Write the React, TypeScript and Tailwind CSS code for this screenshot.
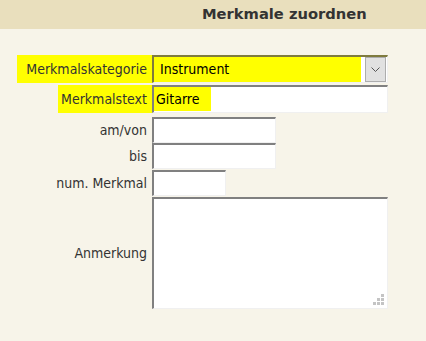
const label = "flex w-[135px] shrink-0 items-center justify-end pr-[5px] text-[#333]"
const field = "border-t-2 border-l-2 border-r border-b border-t-[#808080] border-l-[#808080] border-r-[#f0f0f0] border-b-[#f0f0f0] bg-white"

function Grip() {
  const dots = [
    [8, 0],
    [4, 4],
    [8, 4],
    [0, 8],
    [4, 8],
    [8, 8],
  ]
  return (
    <svg className="absolute right-[3px] bottom-[3px]" width="11" height="11" viewBox="0 0 11 11">
      {dots.map(([x, y]) => (
        <rect key={`${x}-${y}`} x={x} y={y} width="3" height="3" fill="#c4c4c4" />
      ))}
    </svg>
  )
}

export default function App() {
  return (
    <div
      className="h-[341px] w-[426px] bg-[#f7f4e9] text-[14px]"
      style={{ fontFamily: '"DejaVu Sans Condensed", "DejaVu Sans", sans-serif' }}
    >
      <div className="flex h-[29px] items-center bg-[#e9dfbd] pl-[202px]">
        <h1
          className="text-[14.7px] font-bold text-[#333]"
          style={{ fontFamily: '"DejaVu Sans", sans-serif' }}
        >
          Merkmale zuordnen
        </h1>
      </div>

      <div className="flex flex-col pl-[17px] pt-[26px]">
        {/* Merkmalskategorie */}
        <div className="flex h-[28px]">
          <div className={`${label} bg-[#ffff00]`}>Merkmalskategorie</div>
          <div className="flex w-[236px] items-center border-t-2 border-l-2 border-r border-b border-t-[#7f7b3e] border-l-[#7f7b3e] border-r-[#f0f0f0] border-b-[#f0f0f0] bg-white">
            <div className="flex h-full w-[207px] items-center bg-[#ffff00] pl-[6px] text-black">
              Instrument
            </div>
            <div className="ml-auto mr-[1px] flex h-[25px] w-[21px] items-center justify-center border border-[#adadad] bg-[#e1e1e1]">
              <svg width="9" height="6" viewBox="0 0 9 6">
                <path d="M0.5 0.5 L4.5 4.5 L8.5 0.5" fill="none" stroke="#555" strokeWidth="1" />
              </svg>
            </div>
          </div>
        </div>

        {/* Merkmalstext */}
        <div className="mt-[2px] flex h-[28px]">
          <div className="flex w-[135px] shrink-0 justify-end">
            <div className="flex w-[94px] items-center justify-end bg-[#ffff00] pr-[5px] text-[#333]">
              Merkmalstext
            </div>
          </div>
          <div className={`${field} flex w-[236px] items-stretch pb-[1px]`}>
            <div className="flex w-[57px] items-center bg-[#ffff00] pl-[2px] text-black">Gitarre</div>
          </div>
        </div>

        {/* am/von */}
        <div className="mt-[4px] flex h-[26px]">
          <div className={label}>am/von</div>
          <div className={`${field} w-[124px]`} />
        </div>

        {/* bis */}
        <div className="flex h-[26px]">
          <div className={label}>bis</div>
          <div className={`${field} w-[124px]`} />
        </div>

        {/* num. Merkmal */}
        <div className="mt-[1px] flex h-[26px]">
          <div className={label}>num. Merkmal</div>
          <div className={`${field} w-[74px]`} />
        </div>

        {/* Anmerkung */}
        <div className="mt-[1px] flex h-[112px]">
          <div className={label}>Anmerkung</div>
          <div className={`${field} relative w-[236px]`}>
            <Grip />
          </div>
        </div>
      </div>
    </div>
  )
}
